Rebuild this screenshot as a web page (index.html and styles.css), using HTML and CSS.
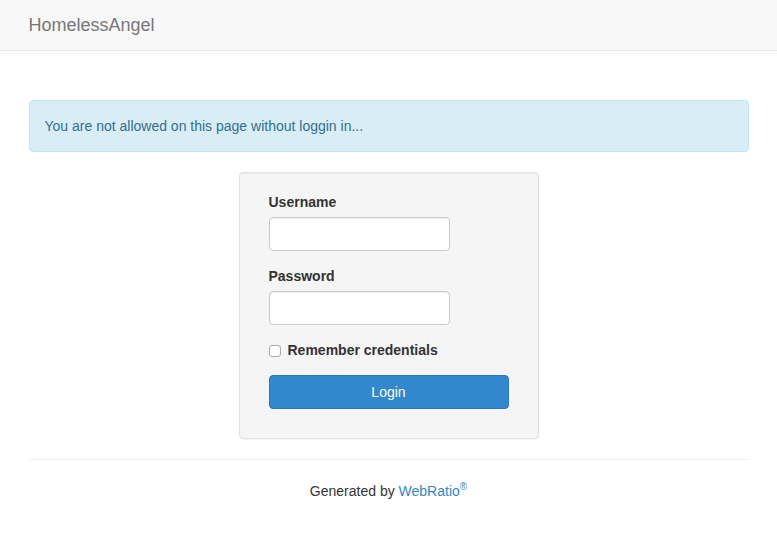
FILE: index.html
```html
<!DOCTYPE html>
<html>
<head>
<meta charset="utf-8">
<link rel="stylesheet" href="styles.css">
</head>
<body>
<nav class="navbar">
  <div class="container">
    <span class="brand">HomelessAngel</span>
  </div>
</nav>
<main class="container">
  <div class="alert">You are not allowed on this page without loggin in...</div>
  <div class="well">
    <form class="login-form">
      <div class="form-group">
        <label class="label">Username</label>
        <input class="input" type="text">
      </div>
      <div class="form-group">
        <label class="label">Password</label>
        <input class="input" type="password">
      </div>
      <div class="checkbox">
        <input class="check" type="checkbox" id="rem">
        <label for="rem" class="label">Remember credentials</label>
      </div>
      <button type="button" class="btn">Login</button>
    </form>
  </div>
  <hr class="rule">
  <footer class="footer">Generated by <a class="link">WebRatio<sup class="reg">®</sup></a></footer>
</main>
</body>
</html>
```
FILE: styles.css
```css
* { box-sizing: border-box; }
html, body { margin: 0; padding: 0; }
body {
  font-family: "Liberation Sans", Arial, sans-serif;
  font-size: 14px;
  line-height: 20px;
  color: #333;
  background: #fff;
}
.container {
  width: 750px;
  margin: 0 auto;
  padding: 0 15px;
}
.navbar {
  height: 51px;
  background: #f8f8f8;
  border-bottom: 1px solid #e7e7e7;
}
.brand {
  display: block;
  font-size: 18px;
  line-height: 20px;
  padding: 15px 0;
  color: #777;
}
.alert {
  margin-top: 49px;
  padding: 15px;
  border: 1px solid #bce8f1;
  border-radius: 4px;
  background: #d9edf7;
  color: #31708f;
}
.well {
  width: 300px;
  margin: 20px auto 0;
  padding: 19px 29px 29px;
  background: #f5f5f5;
  border: 1px solid #e3e3e3;
  border-radius: 4px;
  box-shadow: inset 0 1px 1px rgba(0,0,0,.05), 0 1px 1px rgba(0,0,0,.04);
}
.form-group { margin-bottom: 15px; }
.label {
  display: block;
  font-weight: bold;
  margin-bottom: 5px;
}
.input {
  display: block;
  width: 181px;
  height: 34px;
  padding: 6px 12px;
  border: 1px solid #ccc;
  border-radius: 4px;
  background: #fff;
  box-shadow: inset 0 1px 1px rgba(0,0,0,.075);
  font: inherit;
}
.checkbox {
  display: flex;
  align-items: center;
  height: 20px;
  margin-bottom: 15px;
}
.check {
  appearance: none;
  -webkit-appearance: none;
  width: 12px;
  height: 12px;
  margin: 1px 7px 0 0;
  border: 1px solid #a9a9a9;
  border-radius: 3px;
  background: #fff;
}
.checkbox .label { margin: 0; }
.btn {
  display: block;
  width: 240px;
  height: 34px;
  padding: 6px 12px;
  border: 1px solid #2e78bd;
  border-radius: 4px;
  background: #3287cd;
  color: #fff;
  font: inherit;
  font-size: 14px;
}
.rule {
  margin: 20px 0 0;
  border: 0;
  border-top: 1px solid #eee;
}
.footer {
  text-align: center;
  padding: 21px 0 20px;
}
.link { color: #3287cd; text-decoration: none; }
.reg { font-size: 10px; line-height: 0; vertical-align: super; }
```
